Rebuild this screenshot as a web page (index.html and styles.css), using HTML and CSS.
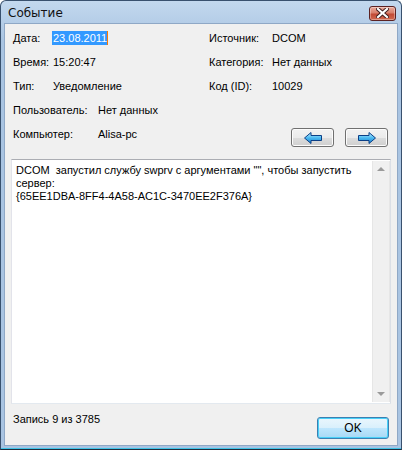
FILE: index.html
```html
<!DOCTYPE html>
<html lang="ru">
<head>
  <meta charset="UTF-8">
  <title>Событие</title>
  <link rel="stylesheet" href="styles.css">
</head>
<body>
<div class="window">
  <div class="titlebar">
    <span class="title">Событие</span>
    <button class="close" aria-label="Закрыть">
      <svg width="13" height="10" viewBox="0 0 13 10"><path d="M2 1 L11 9 M11 1 L2 9" stroke="#3b1c1c" stroke-width="4" stroke-linecap="square"/><path d="M2 1 L11 9 M11 1 L2 9" stroke="#fff" stroke-width="2.2" stroke-linecap="square"/></svg>
    </button>
  </div>
  <div class="client">
    <div class="info">
      <div class="cell"><span class="lbl short">Дата:</span><span class="sel">23.08.2011</span></div>
      <div class="cell"><span class="lbl right">Источник:</span><span>DCOM</span></div>
      <div class="cell"><span class="lbl short">Время:</span><span>15:20:47</span></div>
      <div class="cell"><span class="lbl right">Категория:</span><span>Нет данных</span></div>
      <div class="cell"><span class="lbl short">Тип:</span><span>Уведомление</span></div>
      <div class="cell"><span class="lbl right">Код (ID):</span><span>10029</span></div>
      <div class="cell"><span class="lbl long">Пользователь:</span><span>Нет данных</span></div>
      <div class="cell"></div>
      <div class="cell"><span class="lbl long">Компьютер:</span><span>Alisa-pc</span></div>
      <div class="cell nav">
        <button class="btn arrow" aria-label="Назад">
          <svg width="18" height="12" viewBox="0 0 18 12"><defs><linearGradient id="ga" x1="0" y1="0" x2="0" y2="1"><stop offset="0" stop-color="#c4f0ff"/><stop offset="0.5" stop-color="#48b8f0"/><stop offset="1" stop-color="#1e80d0"/></linearGradient></defs><path d="M0.5 6 L7 0.5 L7 3.5 L17.5 3.5 L17.5 8.5 L7 8.5 L7 11.5 Z" fill="url(#ga)" stroke="#0b3f86" stroke-width="1" stroke-linejoin="round"/></svg>
        </button>
        <button class="btn arrow" aria-label="Вперёд">
          <svg width="18" height="12" viewBox="0 0 18 12"><path d="M17.5 6 L11 0.5 L11 3.5 L0.5 3.5 L0.5 8.5 L11 8.5 L11 11.5 Z" fill="url(#ga)" stroke="#0b3f86" stroke-width="1" stroke-linejoin="round"/></svg>
        </button>
      </div>
    </div>
    <div class="textbox">
      <div class="text">DCOM  запустил службу swprv с аргументами "", чтобы запустить сервер:
{65EE1DBA-8FF4-4A58-AC1C-3470EE2F376A}</div>
      <div class="scroll">
        <span class="tri up"></span>
        <span class="tri down"></span>
      </div>
    </div>
    <div class="footer">
      <span class="status">Запись 9 из 3785</span>
      <button class="btn ok">OK</button>
    </div>
  </div>
</div>
</body>
</html>
```

FILE: styles.css
```css
body { margin: 0; background: #fff; font-family: "Liberation Sans", Arial, sans-serif; font-size: 11px; color: #000; }
button { font-family: inherit; font-size: 11px; padding: 0; cursor: pointer; }

.window {
  width: 402px; height: 450px; box-sizing: border-box;
  border: 1px solid #39516e; border-radius: 6px 6px 0 0;
  border-bottom-color: #1f2d3d;
  background: linear-gradient(#c3d8ee, #a9c4e2 40px, #a9c4e2);
  padding: 0 3px 3px 3px;
  display: flex; flex-direction: column;
  box-shadow: inset 0 -1px 0 #3fc4e8;
}
.titlebar { height: 22px; display: flex; align-items: center; justify-content: space-between; padding: 0 2px 0 4px; }
.title { font-family: "DejaVu Sans", sans-serif; font-size: 12px; color: #111; margin-top: 1px; }
.close {
  width: 27px; height: 15px; margin-top: 2px; margin-right: 0;
  border: 1px solid #5c2222; border-radius: 3px;
  background: linear-gradient(#eaa99a, #d8806c 45%, #c24a35 55%, #d06a50);
  box-shadow: inset 0 0 0 1px rgba(255,255,255,0.35);
  display: flex; align-items: center; justify-content: center;
}

.client {
  flex: 1; background: #f0f0f0; border: 1px solid #8fa8c6;
  padding: 2px 6px 0 6px;
  display: flex; flex-direction: column;
}
.info { display: grid; grid-template-columns: 196px 1fr; grid-auto-rows: 24px; padding-left: 2px; }
.cell { display: flex; align-items: center; white-space: nowrap; }
.lbl.short { width: 40px; }
.lbl.long { width: 85px; }
.lbl.right { width: 63px; }
.sel { background: #3399ff; color: #fff; padding: 1px 0 1px 1px; margin-left: -1px; border-right: 1px solid #ff7a00; }

.nav { justify-content: flex-end; gap: 11px; padding-right: 3px; align-items: flex-end; padding-bottom: 0; }
.btn {
  border: 1px solid #707070; border-radius: 3px;
  background: linear-gradient(#f2f2f2, #ebebeb 50%, #dddddd 51%, #cfcfcf);
  box-shadow: inset 0 0 0 1px #fcfcfc;
}
.arrow { width: 43px; height: 19px; display: flex; align-items: center; justify-content: center; margin-bottom: -1px; }

.textbox {
  margin-top: 13px; height: 245px; box-sizing: border-box;
  background: #fff; border: 1px solid #abadb3; border-left-color: #e2e3ea; border-right-color: #dbdfe6; border-bottom-color: #e3e9ef;
  display: flex;
}
.text { flex: 1; padding: 4px 4px 0 4px; line-height: 13px; white-space: pre-wrap; }
.scroll {
  width: 16px; margin: 1px 0 1px 0; background: #f0f0f0; border-left: 1px solid #e6e6e6; border-right: 1px solid #e6e6e6;
  display: flex; flex-direction: column; justify-content: space-between; align-items: center; padding: 6px 0;
}
.tri { width: 0; height: 0; border-left: 4px solid transparent; border-right: 4px solid transparent; }
.tri.up { border-bottom: 4px solid #9a9a9a; }
.tri.down { border-top: 4px solid #9a9a9a; }

.footer { display: flex; justify-content: space-between; align-items: flex-start; padding-left: 2px; padding-right: 2px; }
.status { margin-top: 9px; line-height: 13px; }
.ok {
  margin-top: 13px; width: 72px; height: 22px;
  border: 1px solid #3c7fb1; border-radius: 3px;
  background: linear-gradient(#eaf6fd, #d9f0fc 50%, #bee6fd 51%, #a7d9f5);
  box-shadow: inset 0 0 0 1px #48d0f8;
  font-size: 12px;
}
```
